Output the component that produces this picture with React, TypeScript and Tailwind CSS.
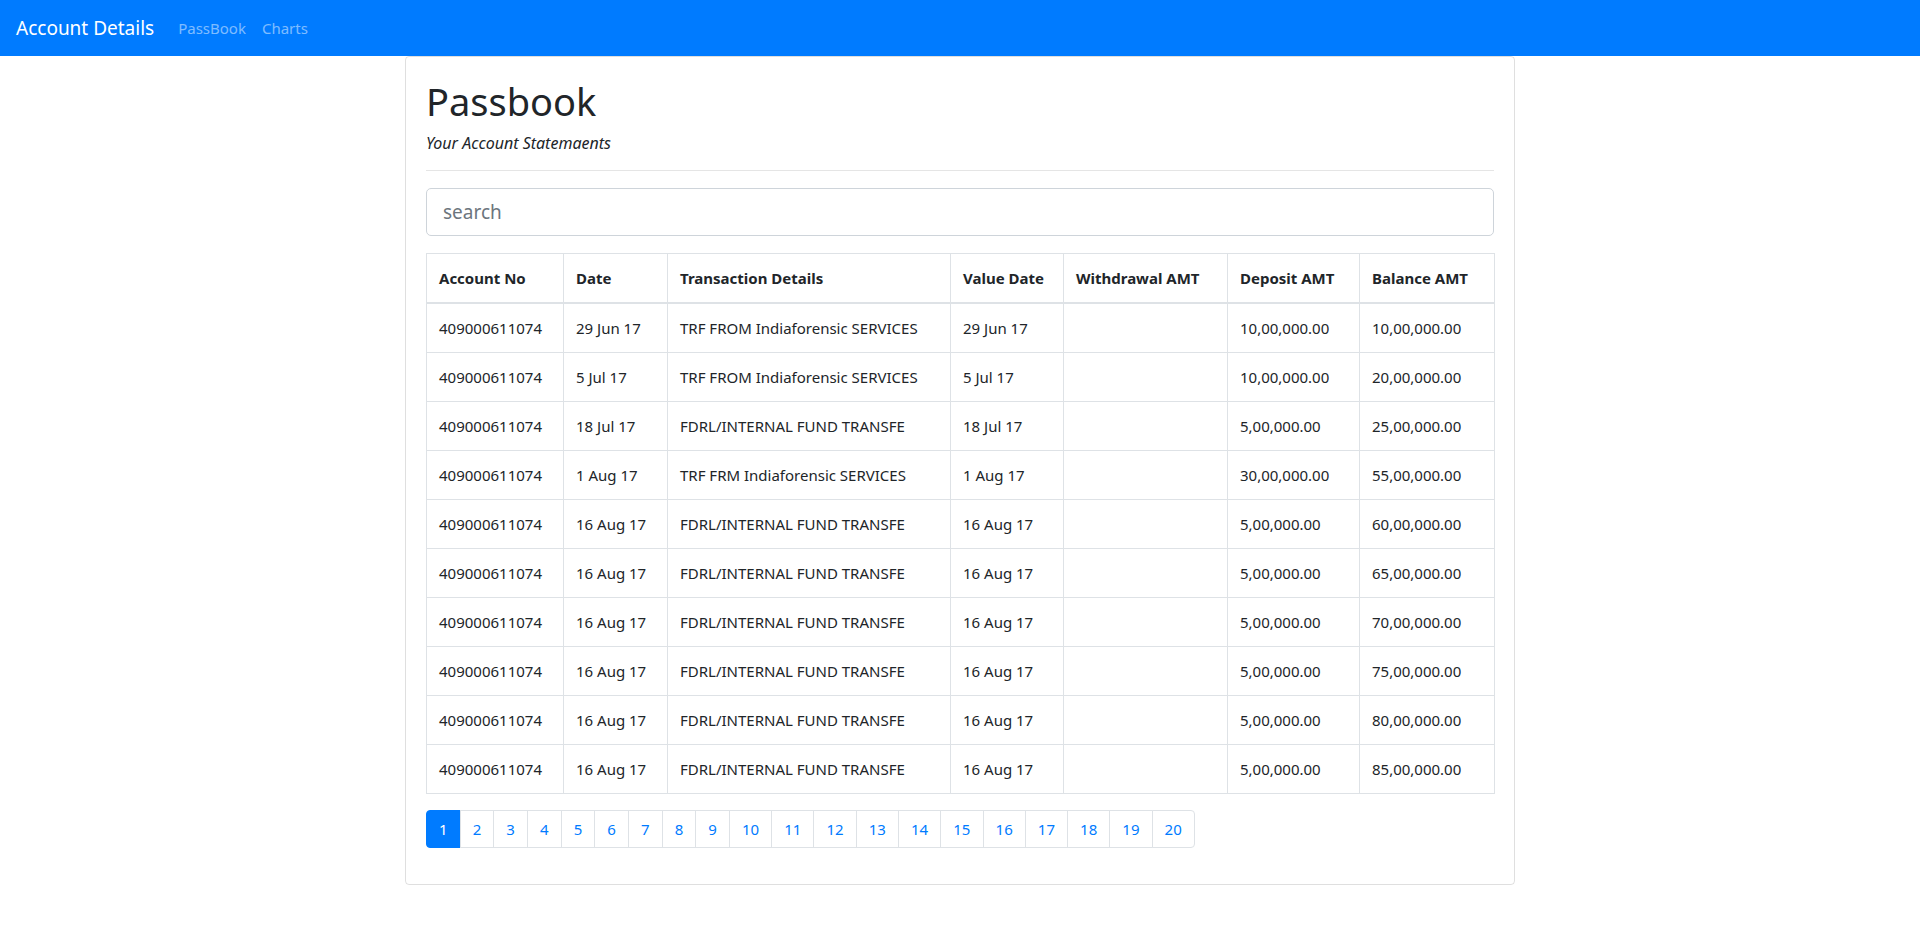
import React from "react";

const rows = [
  ["29 Jun 17", "TRF FROM Indiaforensic SERVICES", "29 Jun 17", "", "10,00,000.00", "10,00,000.00"],
  ["5 Jul 17", "TRF FROM Indiaforensic SERVICES", "5 Jul 17", "", "10,00,000.00", "20,00,000.00"],
  ["18 Jul 17", "FDRL/INTERNAL FUND TRANSFE", "18 Jul 17", "", "5,00,000.00", "25,00,000.00"],
  ["1 Aug 17", "TRF FRM Indiaforensic SERVICES", "1 Aug 17", "", "30,00,000.00", "55,00,000.00"],
  ["16 Aug 17", "FDRL/INTERNAL FUND TRANSFE", "16 Aug 17", "", "5,00,000.00", "60,00,000.00"],
  ["16 Aug 17", "FDRL/INTERNAL FUND TRANSFE", "16 Aug 17", "", "5,00,000.00", "65,00,000.00"],
  ["16 Aug 17", "FDRL/INTERNAL FUND TRANSFE", "16 Aug 17", "", "5,00,000.00", "70,00,000.00"],
  ["16 Aug 17", "FDRL/INTERNAL FUND TRANSFE", "16 Aug 17", "", "5,00,000.00", "75,00,000.00"],
  ["16 Aug 17", "FDRL/INTERNAL FUND TRANSFE", "16 Aug 17", "", "5,00,000.00", "80,00,000.00"],
  ["16 Aug 17", "FDRL/INTERNAL FUND TRANSFE", "16 Aug 17", "", "5,00,000.00", "85,00,000.00"],
];

const headers = ["Account No", "Date", "Transaction Details", "Value Date", "Withdrawal AMT", "Deposit AMT", "Balance AMT"];
const pages = Array.from({ length: 20 }, (_, i) => i + 1);

export default function App() {
  return (
    <div className="min-h-screen bg-white text-[#212529] [font-family:'Segoe_UI','Noto_Sans',sans-serif]">
      <nav className="h-14 bg-[#007bff] px-4 flex items-center">
        <span className="text-[19px] leading-[30px] text-white mr-4">Account Details</span>
        <a className="px-2 text-[15px] leading-6 text-white/50">PassBook</a>
        <a className="px-2 text-[15px] leading-6 text-white/50">Charts</a>
      </nav>
      <div className="w-[1110px] mx-auto border border-black/[.125] rounded-[4px] p-5">
        <h1 className="text-[38px] leading-[48px] font-normal mb-2">Passbook</h1>
        <p className="text-[16px] leading-[21px] italic">Your Account Statemaents</p>
        <hr className="mt-4 mb-[17px] border-0 border-t border-black/10" />
        <input
          className="w-full h-12 border border-[#ced4da] rounded-[5px] px-4 text-[19px] placeholder:text-[#6c757d] outline-none"
          placeholder="search"
        />
        <table className="w-full mt-[17px] table-fixed border-collapse border border-[#dee2e6] text-[15px]">
          <colgroup>
            <col className="w-[137px]" />
            <col className="w-[104px]" />
            <col className="w-[283px]" />
            <col className="w-[113px]" />
            <col className="w-[164px]" />
            <col className="w-[132px]" />
            <col className="w-[135px]" />
          </colgroup>
          <thead>
            <tr>
              {headers.map((h) => (
                <th key={h} className="p-3 text-left font-bold leading-6 border border-[#dee2e6] border-b-2 align-bottom whitespace-nowrap">
                  {h}
                </th>
              ))}
            </tr>
          </thead>
          <tbody>
            {rows.map((r, i) => (
              <tr key={i}>
                <td className="p-3 leading-6 border border-[#dee2e6] whitespace-nowrap">409000611074</td>
                {r.map((c, j) => (
                  <td key={j} className="p-3 leading-6 border border-[#dee2e6] whitespace-nowrap">
                    {c}
                  </td>
                ))}
              </tr>
            ))}
          </tbody>
        </table>
        <div className="flex mt-4 mb-4">
          {pages.map((p) => (
            <a
              key={p}
              className={
                (p === 1
                  ? "bg-[#007bff] border-[#007bff] text-white rounded-l-[4px] "
                  : "bg-white border-[#dee2e6] text-[#007bff] -ml-px ") +
                (p === 20 ? "rounded-r-[4px] " : "") +
                (p < 10 ? "w-[34.67px] " : "w-[43.27px] ") +
                "h-[38px] flex items-center justify-center border text-[15px] leading-5"
              }
            >
              {p}
            </a>
          ))}
        </div>
      </div>
    </div>
  );
}
